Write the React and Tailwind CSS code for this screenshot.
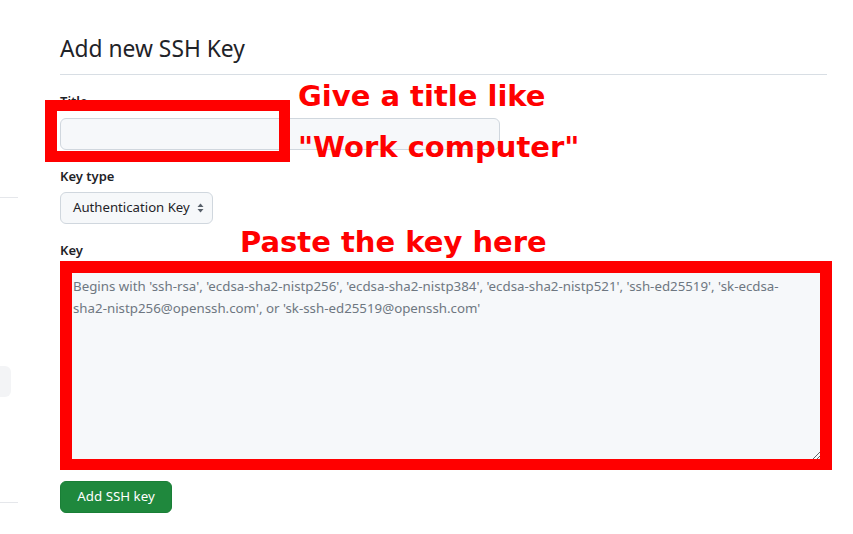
import React from "react";

const ui = { fontFamily: '"Noto Sans", "Liberation Sans", sans-serif' };
const mark = { fontFamily: '"DejaVu Sans", sans-serif' };

const SelectArrows = () => (
  <svg className="h-[12px] w-[7px]" viewBox="0 0 7 12" fill="#57606a">
    <path d="M3.5 1.5 L6.5 5 H0.5 Z" />
    <path d="M3.5 10.5 L6.5 7 H0.5 Z" />
  </svg>
);

const App = () => {
  return (
    <div className="relative w-[853px] h-[534px] overflow-hidden bg-white text-[#1f2328]" style={ui}>
      <div className="flex">
        {/* left sidebar, mostly cut off */}
        <div className="flex flex-col w-[18px] shrink-0">
          <div className="mt-[197px] h-px bg-[#e5e7eb]" />
          <div className="mt-[168px] h-[31px] w-[11px] rounded-r-md bg-[#f3f4f6]" />
          <div className="mt-[105px] h-px bg-[#e5e7eb]" />
        </div>

        <div className="ml-[42px] w-[767px]">
          <h2 className="mt-[31px] pb-[7px] border-b border-[#d8dee4] text-[22.8px] leading-[36px] font-normal">
            Add new SSH Key
          </h2>

          <div className="mt-4">
            <label className="block text-[13px] leading-[21px] font-semibold mb-[6px]">Title</label>
            <input
              type="text"
              className="block w-[440px] h-8 rounded-md border border-[#d0d7de] bg-[#f6f8fa] px-3 text-sm outline-none"
            />
          </div>

          <div className="mt-4">
            <label className="block text-[13px] leading-[21px] font-semibold mb-[5px]">Key type</label>
            <div className="flex items-center justify-between w-[153px] h-8 rounded-md border border-[#d0d7de] bg-[#f6f8fa] pl-3 pr-[8px] text-[13.2px]">
              <span>Authentication Key</span>
              <SelectArrows />
            </div>
          </div>

          <div className="mt-4">
            <label className="block text-[13px] leading-[21px] font-semibold mb-[5px]">Key</label>
            <textarea
              className="block w-[762px] h-[195px] rounded-md border border-[#d0d7de] bg-[#f6f8fa] px-3 pt-2 text-[13.3px] leading-[22px] outline-none placeholder:text-[#6e7781]"
              placeholder={
                "Begins with 'ssh-rsa', 'ecdsa-sha2-nistp256', 'ecdsa-sha2-nistp384', 'ecdsa-sha2-nistp521', 'ssh-ed25519', 'sk-ecdsa-\nsha2-nistp256@openssh.com', or 'sk-ssh-ed25519@openssh.com'"
              }
            />
          </div>

          <button className="mt-5 h-8 w-[112px] rounded-md bg-[#1f883d] text-white text-[13.3px] border border-[#1a7f37]">
            Add SSH key
          </button>
        </div>
      </div>

      {/* red annotations */}
      <div className="absolute left-[45px] top-[100px] w-[245px] h-[62px] border-[11px] border-l-[12px] border-[#ff0000]" />
      <div className="absolute left-[60px] top-[261px] w-[772px] h-[209px] border-[12px] border-b-[11px] border-[#ff0000]" />
      <div className="absolute left-[298px] top-[82px] text-[29px] leading-[29px] font-bold text-[#ff0000] whitespace-nowrap" style={mark}>
        Give a title like
      </div>
      <div className="absolute left-[298px] top-[133px] text-[29px] leading-[29px] font-bold text-[#ff0000] whitespace-nowrap" style={mark}>
        "Work computer"
      </div>
      <div className="absolute left-[240px] top-[228px] text-[29px] leading-[29px] font-bold text-[#ff0000] whitespace-nowrap" style={mark}>
        Paste the key here
      </div>
    </div>
  );
};

export default App;
